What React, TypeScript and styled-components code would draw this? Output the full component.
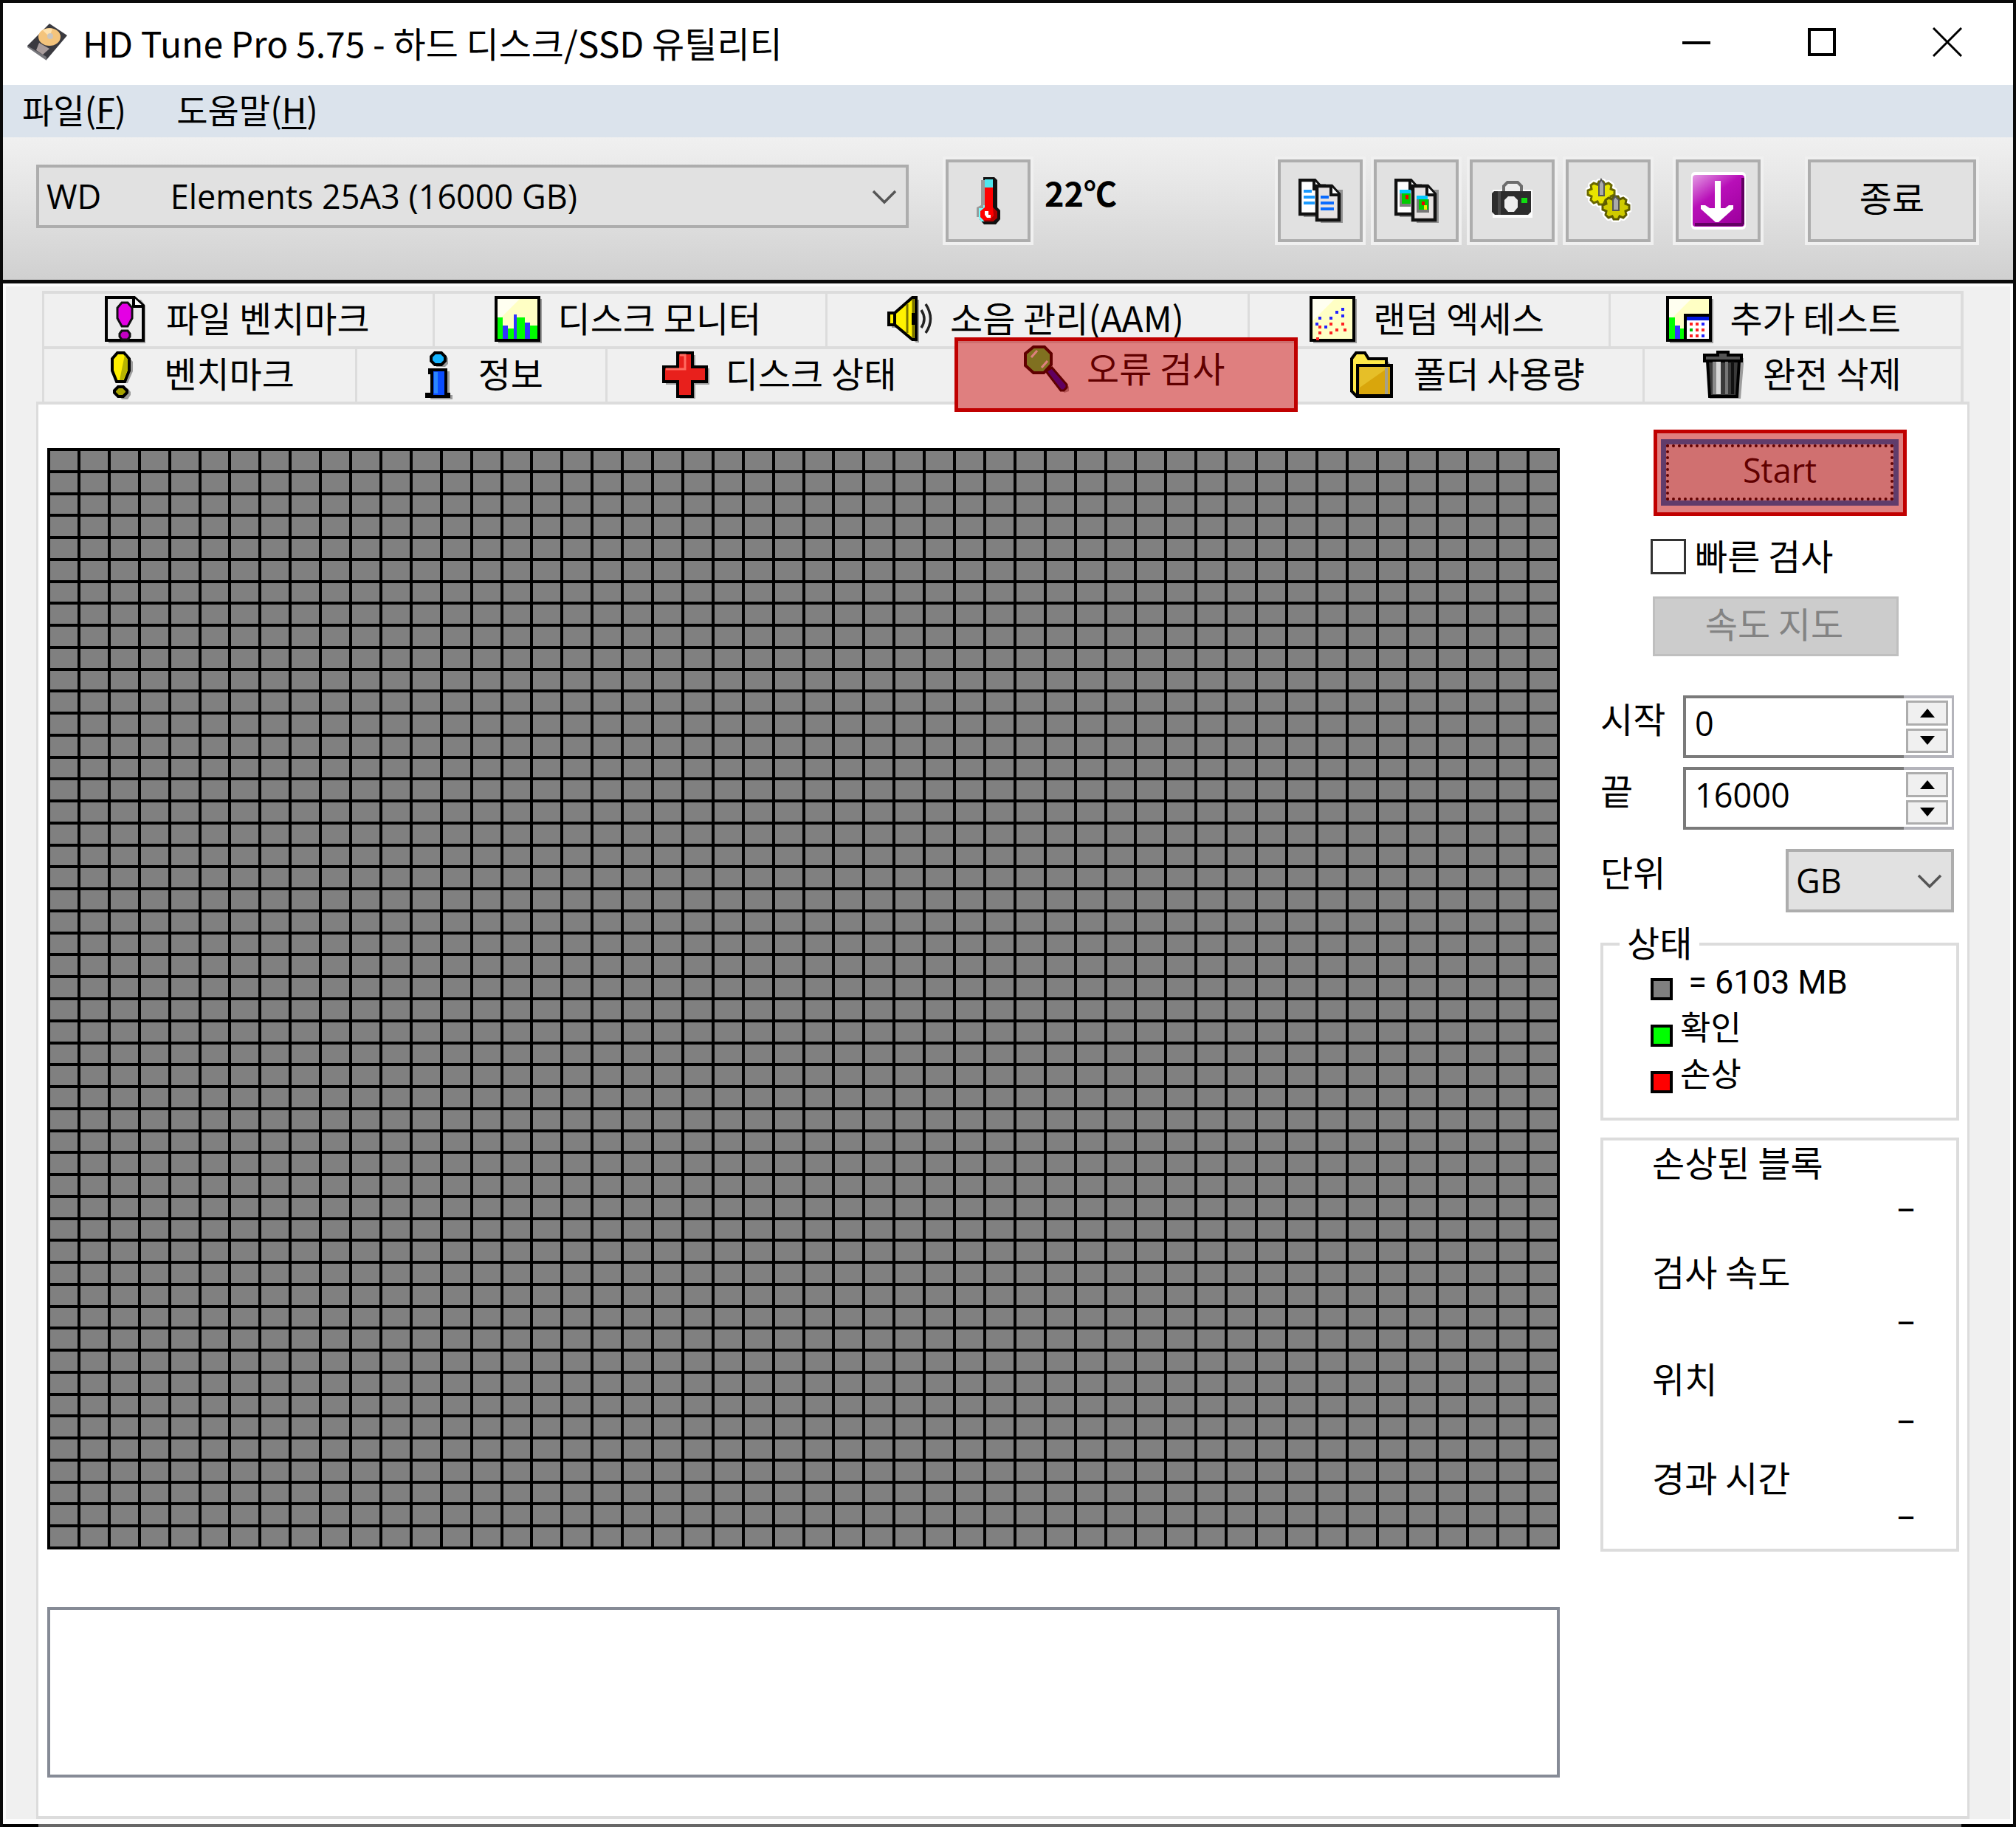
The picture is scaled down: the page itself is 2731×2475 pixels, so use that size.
import React from "react";
import styled, { createGlobalStyle } from "styled-components";

const LATIN = `"Open Sans", "Noto Sans CJK KR", sans-serif`;
const KOREAN = `"Noto Sans CJK KR", sans-serif`;

const GlobalStyle = createGlobalStyle`
  *, *::before, *::after { box-sizing: border-box; }
  body { margin: 0; background: #f0f0f0; color: #000; }
  button, input, select, textarea {
    font: inherit; color: inherit; margin: 0; padding: 0; border-radius: 0; outline: 0;
  }
  svg { display: block; flex: none; }
`;

const Window = styled.div`
  display: flex;
  flex-direction: column;
  min-height: 100vh;
  border: 4px solid #0a0a0a;
  border-bottom: 0;
  font: 400 48px/60px ${KOREAN};
`;

const TitleBar = styled.header`
  display: flex;
  align-items: center;
  height: 111px;
  padding: 0 4px 6px 32px;
  background: #fff;
`;

const Title = styled.h1`
  flex: 1;
  margin: 0 0 0 20px;
  font: 400 48px/60px ${KOREAN};
  white-space: nowrap;
`;

const CaptionButton = styled.button`
  display: grid;
  place-items: center;
  width: 170px;
  height: 105px;
  border: 0;
  background: transparent;
`;

const MenuBar = styled.nav`
  display: flex;
  align-items: center;
  gap: 68px;
  height: 71px;
  padding: 0 0 8px 26px;
  background: #dbe3ec;
`;

const MenuItem = styled.button`
  border: 0;
  background: transparent;
  font-size: 46px;
  line-height: 60px;
  u { text-decoration-thickness: 3px; text-underline-offset: 5px; }
`;

const Toolbar = styled.div`
  display: flex;
  align-items: flex-start;
  height: 198px;
  padding: 30px 50px 0 45px;
  border-bottom: 5px solid #0a0a0a;
  background: linear-gradient(#f0f0f0, #e6e6e6 35%, #d0d0d0);
`;

const SelectBox = styled.div<{ $basis: number }>`
  position: relative;
  flex: 0 1 ${(p) => p.$basis}px;
  select {
    appearance: none;
    width: 100%;
    height: 86px;
    padding-left: 10px;
    border: 4px solid #adadad;
    background: #e1e1e1;
    font: 400 45px/60px ${LATIN};
  }
  svg {
    position: absolute;
    right: 16px;
    top: 34px;
    pointer-events: none;
  }
`;

const DriveSlot = styled.div`
  display: flex;
  flex: 0 1 1182px;
  margin: 7px 50px 0 0;
`;

const ToolButton = styled.button<{ $wide?: boolean }>`
  display: grid;
  place-items: center;
  flex: none;
  width: ${(p) => (p.$wide ? 228 : 115)}px;
  height: 112px;
  padding-bottom: ${(p) => (p.$wide ? 12 : 0)}px;
  border: 4px solid #adadad;
  background: #e1e1e1;
  box-shadow: 0 0 0 4px #f0f0f0;
`;

const Temperature = styled.output`
  margin: 15px 0 0 19px;
  font: 700 45px/60px ${KOREAN};
`;

const ToolGroup = styled.div`
  display: flex;
  gap: 15px;
  margin-left: auto;
  & > :nth-child(5) { margin-left: 19px; }
  & > :nth-child(6) { margin-left: 49px; }
`;

const Body = styled.main`
  display: flex;
  flex: 1;
  flex-direction: column;
  padding: 6px 55px 0 41px;
  border: 4px solid #fcfcfc;
  border-bottom-width: 7px;
  background: #f0f0f0;
`;

const TabRow = styled.div<{ $columns: string }>`
  display: grid;
  grid-template-columns: ${(p) => p.$columns};
  height: 75px;
  margin: 0 8px;
  border-right: 4px solid #dcdcdc;
`;

const Tab = styled.button<{ $active?: boolean }>`
  position: relative;
  display: flex;
  align-items: center;
  justify-content: center;
  gap: 22px;
  height: ${(p) => (p.$active ? 87 : 75)}px;
  margin-top: ${(p) => (p.$active ? -8 : 0)}px;
  padding: 0 6px ${(p) => (p.$active ? 13 : 2)}px 0;
  border: solid #dcdcdc;
  border-width: 4px 0 0 3px;
  background: ${(p) => (p.$active ? "#fff" : "#f0f0f0")};
  z-index: ${(p) => (p.$active ? 2 : 0)};
  white-space: nowrap;
`;

const Caption = styled.span`
  padding-bottom: 7px;
`;

/* Translucent red marker laid over a control */
const Highlight = styled.span<{ $inset: string }>`
  position: absolute;
  inset: ${(p) => p.$inset};
  border: 5px solid #c00000;
  background: rgba(192, 0, 0, 0.5);
  background-clip: padding-box;
  pointer-events: none;
`;

const Panel = styled.section`
  display: grid;
  grid-template-columns: minmax(0, 1fr) 486px;
  gap: 55px;
  flex: 1;
  padding: 0 11px 0 12px;
  border: 4px solid #dcdcdc;
  border-width: 4px 3px;
  background: #fff;
`;

const MapColumn = styled.div`
  display: flex;
  flex-direction: column;
  gap: 78px;
  padding: 59px 0 52px;
`;

const BlockMap = styled.div`
  display: grid;
  flex: 1;
  grid-template: repeat(50, minmax(12px, 1fr)) / repeat(50, minmax(0, 1fr));
  gap: 4px;
  padding: 4px;
  background: #000;
`;

const Block = styled.i`
  background: #808080;
`;

const LogBox = styled.textarea`
  display: block;
  width: 100%;
  height: 231px;
  border: 4px solid #868b96;
  background: #fff;
  resize: none;
`;

const Sidebar = styled.aside`
  display: flex;
  flex-direction: column;
  padding-top: 47px;
`;

const StartSlot = styled.div`
  position: relative;
  width: 322px;
  margin: 0 0 45px 82px;
`;

const StartButton = styled.button`
  display: block;
  width: 100%;
  height: 90px;
  padding: 0 0 6px;
  border: 7px solid #0078d7;
  background: #e1e1e1;
  outline: 4px dotted #000;
  outline-offset: -11px;
  font: 400 45px/56px ${LATIN};
`;

const CheckLabel = styled.label`
  display: flex;
  align-items: center;
  gap: 12px;
  height: 48px;
  margin: 0 0 30px 68px;
  input {
    appearance: none;
    width: 48px;
    height: 48px;
    border: 3px solid #333;
    background: #fff;
  }
`;

const SpeedMapButton = styled.button`
  width: 333px;
  height: 81px;
  margin: 0 0 53px 71px;
  padding: 0 4px 12px 0;
  border: 3px solid #bfbfbf;
  background: #ccc;
  line-height: 60px;
  &:disabled { color: #838383; }
`;

const Field = styled.div<{ $after: number }>`
  display: flex;
  justify-content: space-between;
  height: 85px;
  margin: 0 7px ${(p) => p.$after}px 0;
`;

const NumberBox = styled.div`
  display: flex;
  width: 367px;
  input {
    flex: 1;
    min-width: 0;
    padding: 0 0 9px 12px;
    border: 4px solid #7a7a7a;
    border-right: 0;
    background: #fff;
    font: 400 45px/60px ${LATIN};
  }
`;

const Spinner = styled.div`
  display: flex;
  flex-direction: column;
  gap: 4px;
  width: 68px;
  padding: 3px 5px 3px 3px;
  border: solid #b4b4bb;
  border-width: 4px 3px 4px 0;
  button {
    display: grid;
    place-items: center;
    flex: 1;
    border: 3px solid #adadad;
    background: #f0f0f0;
  }
`;

const Legend = styled.fieldset`
  margin: 22px 0 23px;
  padding: 0 0 24px 64px;
  border: 4px solid #dcdcdc;
  legend {
    margin-left: -42px;
    padding: 0 10px 8px;
    line-height: 36px;
  }
`;

const LegendRow = styled.div`
  display: flex;
  align-items: center;
  gap: 10px;
  height: 63px;
  padding-bottom: 4px;
  font: 400 45px/60px "Roboto", ${KOREAN};
`;

const Swatch = styled.span<{ $color: string }>`
  width: 30px;
  height: 30px;
  margin-top: 18px;
  border: 4px solid #000;
  background: ${(p) => p.$color};
`;

const Results = styled.dl`
  display: grid;
  grid-template-rows: 61px 87px 66px 79px 55px 79px 51px;
  height: 561px;
  margin: 0;
  padding: 0 56px 0 66px;
  border: 4px solid #dcdcdc;
  line-height: 56px;
  dt, dd { margin: 0; height: 56px; }
  dd { text-align: right; font-family: ${LATIN}; }
`;

const BottomEdge = styled.div`
  height: 4px;
  background: linear-gradient(to right, #000 48px, #666 48px calc(100% - 70px), #000 calc(100% - 70px));
`;

/* ---------- icons ---------- */

const Chevron = () => (
  <svg width="34" height="20" viewBox="0 0 34 20" fill="none" stroke="#555" strokeWidth="3.5">
    <path d="M2 2l15 15L32 2" />
  </svg>
);

const DriveIcon = () => (
  <svg width="56" height="52" viewBox="0 0 56 52">
    <path d="M31 1L55 17 27 50 1 31z" fill="#3a3a40" />
    <path d="M1 31l26 15v5L1 33z" fill="#77777c" />
    <path d="M17 27l14 8-9 8-9-6z" fill="#a89c9c" />
    <ellipse cx="31" cy="19" rx="15" ry="12" fill="#f4c47c" />
    <path d="M31 19L22 10a15 12 0 0 1 13-2z" fill="#ffe2ae" />
    <circle cx="32" cy="18" r="4" fill="#c9c5c0" />
  </svg>
);

const Thermometer = () => (
  <svg width="36" height="66" viewBox="0 0 36 66">
    <path d="M11 1h15l4 4v37l4 4v12l-6 7H12l-6-7V46l5-5z" fill="#111" />
    <path d="M8 5h5v36l-5 4v10H2V42l6-3z" fill="#9a9a9a" />
    <path d="M5 43h6v-4h3v22H8l-3-5z" fill="#7ff" />
    <path d="M13 4h11v12H13z" fill="#4ee6ee" />
    <path d="M13 15h11v27l6 6v8l-6 5H13l-6-6v-8l6-5z" fill="#f00" />
    <path d="M24 42l6 6v8l-6 5H13l-2-2h9l5-6z" fill="#b00000" />
    <path d="M13 47h5v5h3v4h-5l-3-4z" fill="#fff" />
  </svg>
);

const Page = ({ x, y, fill }: { x: number; y: number; fill: string }) => (
  <g transform={`translate(${x} ${y})`}>
    <path d="M3 5h30v45H3z" fill="#000" opacity=".35" transform="translate(4 2)" />
    <path d="M2 2h20l10 11v35H2z" fill={fill} stroke="#111" strokeWidth="4.5" />
    <path d="M21 2v12h11" fill="#fff" stroke="#111" strokeWidth="4" />
  </g>
);

const CopyText = () => (
  <svg width="60" height="60" viewBox="0 0 60 60">
    <Page x={0} y={0} fill="#fff" />
    <path d="M7 15h11v4H7zM7 23h15v4H7zM7 31h15v4H7z" fill="#1b9bff" />
    <Page x={23} y={8} fill="#e6e2e2" />
    <path d="M30 23h11v4H30zM30 31h18v4H30zM30 39h18v4H30z" fill="#0a6bff" />
  </svg>
);

const CopyImage = () => (
  <svg width="60" height="60" viewBox="0 0 60 60">
    <Page x={0} y={0} fill="#fff" />
    <path d="M7 15h15v5H7z" fill="#00c8ff" />
    <path d="M7 20h15v18H7z" fill="#808080" />
    <path d="M10 20h12v14H10z" fill="#0c0" />
    <path d="M15 22h4v6h-4z" fill="#e00" />
    <Page x={23} y={8} fill="#e6e2e2" />
    <path d="M30 23h15v5H30z" fill="#00c8ff" />
    <path d="M30 28h17v18H30z" fill="#777" />
    <path d="M33 28h13v14H33z" fill="#0c0" />
    <path d="M37 31h4v5h-4z" fill="#e00" />
    <path d="M40 36h4v6h-4z" fill="#ee0" />
  </svg>
);

const Camera = () => (
  <svg width="60" height="54" viewBox="0 0 60 54">
    <path d="M5 12h10l6-10h18l6 10h12v38H3V12z" fill="#fff" opacity=".9" />
    <path d="M18 16V7l5-5h14l5 5v9" fill="#eee" stroke="#6d6d6d" strokeWidth="4" />
    <path d="M5 14h50v28l-4 4H6l-4-4V17z" fill="#2c2c2c" />
    <path d="M10 14h4v32h-4z" fill="#4a4a4a" />
    <path d="M24 21h8l5 5v10l-5 6h-8l-5-6V26z" fill="#eee" />
    <path d="M42 23h8v7h-8z" fill="#1d1" />
  </svg>
);

const cog =
  "M-3-16h6l2 4 5-2 4 3-1 5 5 2v6l-5 2 1 5-4 4-5-2-2 4h-6l-2-4-5 2-4-4 1-5-5-2v-6l5-2-1-5 4-3 5 2z";

const Gears = () => (
  <svg width="62" height="62" viewBox="0 0 62 62">
    <g stroke="#fff" strokeWidth="8" strokeLinejoin="round">
      <path d={cog} transform="translate(21 21)" />
      <path d={cog} transform="translate(41 41)" />
    </g>
    <path d={cog} transform="translate(21 21)" fill="#e8e400" stroke="#6a6800" strokeWidth="3" />
    <path d="M18 24V8l3-6 4 6v16z" fill="#aaa" stroke="#555" strokeWidth="2" />
    <path d={cog} transform="translate(41 41)" fill="#cfcb00" stroke="#5d5b00" strokeWidth="3" />
    <path d="M37 44V30l3-5 5 5v14z" fill="#aaa" stroke="#555" strokeWidth="2" />
  </svg>
);

const Download = () => (
  <svg width="74" height="78" viewBox="0 0 74 78">
    <defs>
      <linearGradient id="dl" x1="0" y1="0" x2=".7" y2="1">
        <stop offset="0" stopColor="#e49be4" />
        <stop offset=".45" stopColor="#b80fb8" />
        <stop offset="1" stopColor="#a000a0" />
      </linearGradient>
    </defs>
    <rect width="74" height="78" rx="5" fill="#fff" />
    <rect x="2" y="4" width="70" height="70" rx="4" fill="url(#dl)" />
    <path d="M5 71h65M70 8v63" stroke="#620062" strokeWidth="4" />
    <path d="M32 12h8v37h6l5-4h6v5L37 68h-4L13 50v-5h6l6 4h7z" fill="#fff" />
  </svg>
);

const Glyph = ({ children }: { children: React.ReactNode }) => (
  <svg width="64" height="66" viewBox="0 0 64 66">{children}</svg>
);

const Sheet = ({ children }: { children?: React.ReactNode }) => (
  <Glyph>
    <path d="M5 5h59v60H5z" fill="#000" opacity=".35" />
    <path d="M2 3h58v58H2z" fill="#ffffc4" stroke="#000" strokeWidth="4" />
    <path d="M4 5h30L4 35z" fill="#fff" opacity=".75" />
    {children}
  </Glyph>
);

const FileBench = () => (
  <Glyph>
    <path d="M8 6h44l6 8v51H8z" fill="#000" opacity=".35" />
    <path d="M5 3h38l12 11v47H5z" fill="#ececec" stroke="#000" strokeWidth="4" />
    <path d="M42 3v12h13" fill="#fff" stroke="#000" strokeWidth="4" />
    <path d="M26 10h8l6 7v14l-6 11h-8l-6-11V17z" fill="#e400e4" stroke="#111" strokeWidth="3" />
    <path d="M26 48h8l3 4v4l-3 4h-8l-3-4v-4z" fill="#c400c4" stroke="#111" strokeWidth="3" />
  </Glyph>
);

const DiskMonitor = () => (
  <Sheet>
    <path d="M4 30h7v29H4zM18 45h8v14h-8zM29 30h12v29H29zM48 41h10v18H48z" fill="#0f0" />
    <path d="M11 41h7v18h-7zM26 26h4v33h-4zM41 37h7v22h-7z" fill="#33f" />
  </Sheet>
);

const Speaker = () => (
  <Glyph>
    <path d="M3 26h7L35 3h5v58h-4L10 41H3z" fill="#000" opacity=".35" transform="translate(4 3)" />
    <path d="M3 24h8L35 3h5v57h-5L11 40H3z" fill="#fff200" stroke="#000" strokeWidth="4" />
    <path d="M36 5v53M28 12v39" stroke="#7a7400" strokeWidth="3" />
    <path d="M11 25v14M36 24v16" stroke="#000" strokeWidth="4" />
    <path d="M47 20q8 12 0 24M53 12q13 20 0 39" fill="none" stroke="#222" strokeWidth="3.5" />
  </Glyph>
);

const blueDots = [[8, 37], [12, 29], [20, 41], [27, 29], [35, 21], [43, 17], [43, 26]];
const redDots = [[12, 41], [27, 37], [43, 37], [12, 49], [35, 45], [46, 45], [27, 49], [9, 57]];

const RandomAccess = () => (
  <Sheet>
    {blueDots.map(([x, y]) => <rect key={`${x}-${y}`} x={x} y={y} width="4" height="4" fill="#22f" />)}
    {redDots.map(([x, y]) => <rect key={`${x}-${y}`} x={x} y={y} width="4" height="4" fill="#f22" />)}
  </Sheet>
);

const ExtraTests = () => (
  <Sheet>
    <path d="M4 30h8v29H4zM18 45h7v14h-7z" fill="#0f0" />
    <path d="M12 41h7v18h-7z" fill="#33f" />
    <path d="M26 27h34v34H26z" fill="#fff" stroke="#000" strokeWidth="4" />
    <path d="M28 29h30v5H28z" fill="#0016e0" />
    {[37, 45, 53].map((y) => [32, 40, 48].map((x) => (
      <rect key={`${x}-${y}`} x={x} y={y} width="4" height="4" fill={x === 48 && y !== 45 ? "#22f" : x === 32 && y === 45 ? "#0b0" : "#f22"} />
    )))}
  </Sheet>
);

const Exclamation = () => (
  <Glyph>
    <path d="M28 5h8l8 9v13l-7 16h-8l-7-16V14zM29 50h8l4 5v4l-4 6h-8l-4-6v-4z" fill="#000" opacity=".35" transform="translate(0 1)" />
    <path d="M23 3h9l7 8v16l-6 15H22l-6-15V11z" fill="#ffee00" stroke="#000" strokeWidth="4" />
    <path d="M33 6l4 6v14l-6 14h-5z" fill="#b8b400" />
    <path d="M24 49h7l5 5v3l-5 5h-7l-5-5v-3z" fill="#a8a400" stroke="#000" strokeWidth="4" />
  </Glyph>
);

const Info = () => (
  <Glyph>
    <path d="M26 5h12l4 4v8l-4 4H26zM22 27h22v32h4v6H18z" fill="#000" opacity=".35" transform="translate(3 1)" />
    <path d="M27 3h9l5 5v6l-5 5h-9l-5-5V8z" fill="#14b4ff" stroke="#000" strokeWidth="4" />
    <path d="M20 26h22v33h4v3H16v-3h7V30h-3z" fill="#0a4cff" stroke="#000" strokeWidth="4" />
    <path d="M26 29h5v29h-5z" fill="#2a86ff" />
  </Glyph>
);

const Cross = () => (
  <Glyph>
    <path d="M24 6h21v18h19v22H45v19H24V46H5V24h19z" fill="#000" opacity=".35" />
    <path d="M21 3h20v19h19v20H41v20H21V42H2V22h19z" fill="#e8201c" stroke="#000" strokeWidth="4" />
    <path d="M24 6h7v19H5" fill="none" stroke="#ff6b60" strokeWidth="3" />
  </Glyph>
);

const Magnifier = () => (
  <Glyph>
    <path d="M33 40l9-8 20 25v6l-6 2z" fill="#000" opacity=".35" />
    <path d="M31 36l8-5 20 23v4l-4 4h-4z" fill="#0000c0" stroke="#000" strokeWidth="3" />
    <path d="M14 3h15l9 9v15L28 38H14L3 28V12z" fill="#40e040" stroke="#000" strokeWidth="4" />
    <path d="M11 17l8-9M25 31l8-9" stroke="#fff" strokeWidth="3" />
  </Glyph>
);

const Folder = () => (
  <Glyph>
    <path d="M5 10l8-6h8l5 9h24l8 10v41H12z" fill="#000" opacity=".35" />
    <path d="M2 11l6-8h12l5 8h24v11h7v40H9l-7-7z" fill="#ffe94a" stroke="#000" strokeWidth="4" />
    <path d="M10 20h46v41H10z" fill="#d9a60c" stroke="#000" strokeWidth="4" />
    <path d="M13 22h40L13 50z" fill="#e6bf28" />
    <path d="M49 23v36" stroke="#a5a08c" strokeWidth="4" />
  </Glyph>
);

const Trash = () => (
  <Glyph>
    <path d="M10 10h50v8l-4 47H14z" fill="#000" opacity=".35" />
    <path d="M7 6h18V2h14v4h18v8H7z" fill="#555" stroke="#000" strokeWidth="4" />
    <path d="M11 14h43l-3 48H14z" fill="#3a3a3a" stroke="#000" strokeWidth="4" />
    <path d="M18 15h5v44h-5z" fill="#8a8a8a" />
    <path d="M23 15h6v44h-6z" fill="#d8d8d8" />
    <path d="M35 15h4v44h-4z" fill="#777" />
    <path d="M43 15h4v44h-4z" fill="#111" />
  </Glyph>
);

/* ---------- data ---------- */

type TabSpec = { label: string; icon: React.ReactNode; active?: boolean };

const upperTabs: TabSpec[] = [
  { label: "파일 벤치마크", icon: <FileBench /> },
  { label: "디스크 모니터", icon: <DiskMonitor /> },
  { label: "소음 관리(AAM)", icon: <Speaker /> },
  { label: "랜덤 엑세스", icon: <RandomAccess /> },
  { label: "추가 테스트", icon: <ExtraTests /> },
];

const lowerTabs: TabSpec[] = [
  { label: "벤치마크", icon: <Exclamation /> },
  { label: "정보", icon: <Info /> },
  { label: "디스크 상태", icon: <Cross /> },
  { label: "오류 검사", icon: <Magnifier />, active: true },
  { label: "폴더 사용량", icon: <Folder /> },
  { label: "완전 삭제", icon: <Trash /> },
];

const results = ["손상된 블록", "검사 속도", "위치", "경과 시간"];
const blocks = Array.from({ length: 2500 }, (_, i) => i);

const Tabs = ({ items, columns }: { items: TabSpec[]; columns: string }) => (
  <TabRow $columns={columns} role="tablist">
    {items.map((t) => (
      <Tab key={t.label} role="tab" aria-selected={!!t.active} $active={t.active}>
        {t.icon}
        <Caption>{t.label}</Caption>
        {t.active && <Highlight $inset="-8px -4px -10px -5px" />}
      </Tab>
    ))}
  </TabRow>
);

const Range = ({ id, label, value, after }: { id: string; label: string; value: string; after: number }) => (
  <Field $after={after}>
    <label htmlFor={id}>{label}</label>
    <NumberBox>
      <input id={id} type="text" inputMode="numeric" defaultValue={value} />
      <Spinner>
        <button aria-label={`${label} +`}>
          <svg width="20" height="12" viewBox="0 0 20 12"><path d="M10 0l10 12H0z" /></svg>
        </button>
        <button aria-label={`${label} -`}>
          <svg width="20" height="12" viewBox="0 0 20 12"><path d="M10 12L0 0h20z" /></svg>
        </button>
      </Spinner>
    </NumberBox>
  </Field>
);

export default function App() {
  return (
    <>
      <GlobalStyle />
      <Window>
        <TitleBar>
          <DriveIcon />
          <Title>HD Tune Pro 5.75 - 하드 디스크/SSD 유틸리티</Title>
          <CaptionButton aria-label="최소화">
            <svg width="40" height="40" viewBox="0 0 40 40"><path d="M1 21h38" stroke="#000" strokeWidth="4" /></svg>
          </CaptionButton>
          <CaptionButton aria-label="최대화">
            <svg width="40" height="40" viewBox="0 0 40 40"><path d="M3 3h34v34H3z" fill="none" stroke="#000" strokeWidth="4" /></svg>
          </CaptionButton>
          <CaptionButton aria-label="닫기">
            <svg width="40" height="40" viewBox="0 0 40 40"><path d="M1 1l38 38M39 1L1 39" stroke="#000" strokeWidth="3" /></svg>
          </CaptionButton>
        </TitleBar>
        <MenuBar>
          <MenuItem>파일(<u>F</u>)</MenuItem>
          <MenuItem>도움말(<u>H</u>)</MenuItem>
        </MenuBar>
        <Toolbar>
          <DriveSlot>
            <SelectBox $basis={1182}>
              <select aria-label="드라이브">
                <option>{"WD" + "\u00a0".repeat(8) + "Elements 25A3 (16000 GB)"}</option>
              </select>
              <Chevron />
            </SelectBox>
          </DriveSlot>
          <ToolButton aria-label="온도"><Thermometer /></ToolButton>
          <Temperature>22℃</Temperature>
          <ToolGroup>
            <ToolButton aria-label="텍스트 복사"><CopyText /></ToolButton>
            <ToolButton aria-label="이미지 복사"><CopyImage /></ToolButton>
            <ToolButton aria-label="스크린샷"><Camera /></ToolButton>
            <ToolButton aria-label="설정"><Gears /></ToolButton>
            <ToolButton aria-label="저장"><Download /></ToolButton>
            <ToolButton $wide>종료</ToolButton>
          </ToolGroup>
        </Toolbar>
        <Body>
          <Tabs items={upperTabs} columns="529fr 533fr 572fr 490fr 477fr" />
          <Tabs items={lowerTabs} columns="425fr 339fr 476fr 460fr 472fr 432fr" />
          <Panel>
            <MapColumn>
              <BlockMap>{blocks.map((i) => <Block key={i} />)}</BlockMap>
              <LogBox readOnly aria-label="로그" />
            </MapColumn>
            <Sidebar>
              <StartSlot>
                <StartButton>Start</StartButton>
                <Highlight $inset="-13px -11px -14px -10px" />
              </StartSlot>
              <CheckLabel>
                <input type="checkbox" />
                <Caption>빠른 검사</Caption>
              </CheckLabel>
              <SpeedMapButton disabled>속도 지도</SpeedMapButton>
              <Range id="from" label="시작" value="0" after={12} />
              <Range id="to" label="끝" value="16000" after={26} />
              <Field $after={0}>
                <label htmlFor="unit">단위</label>
                <SelectBox $basis={228}>
                  <select id="unit"><option>GB</option></select>
                  <Chevron />
                </SelectBox>
              </Field>
              <Legend>
                <legend>상태</legend>
                <LegendRow><Swatch $color="#808080" />{"\u00a0= 6103 MB"}</LegendRow>
                <LegendRow><Swatch $color="#00ff00" />확인</LegendRow>
                <LegendRow><Swatch $color="#ff0000" />손상</LegendRow>
              </Legend>
              <Results>
                {results.map((r) => (
                  <React.Fragment key={r}>
                    <dt>{r}</dt>
                    <dd>–</dd>
                  </React.Fragment>
                ))}
              </Results>
            </Sidebar>
          </Panel>
        </Body>
        <BottomEdge />
      </Window>
    </>
  );
}
